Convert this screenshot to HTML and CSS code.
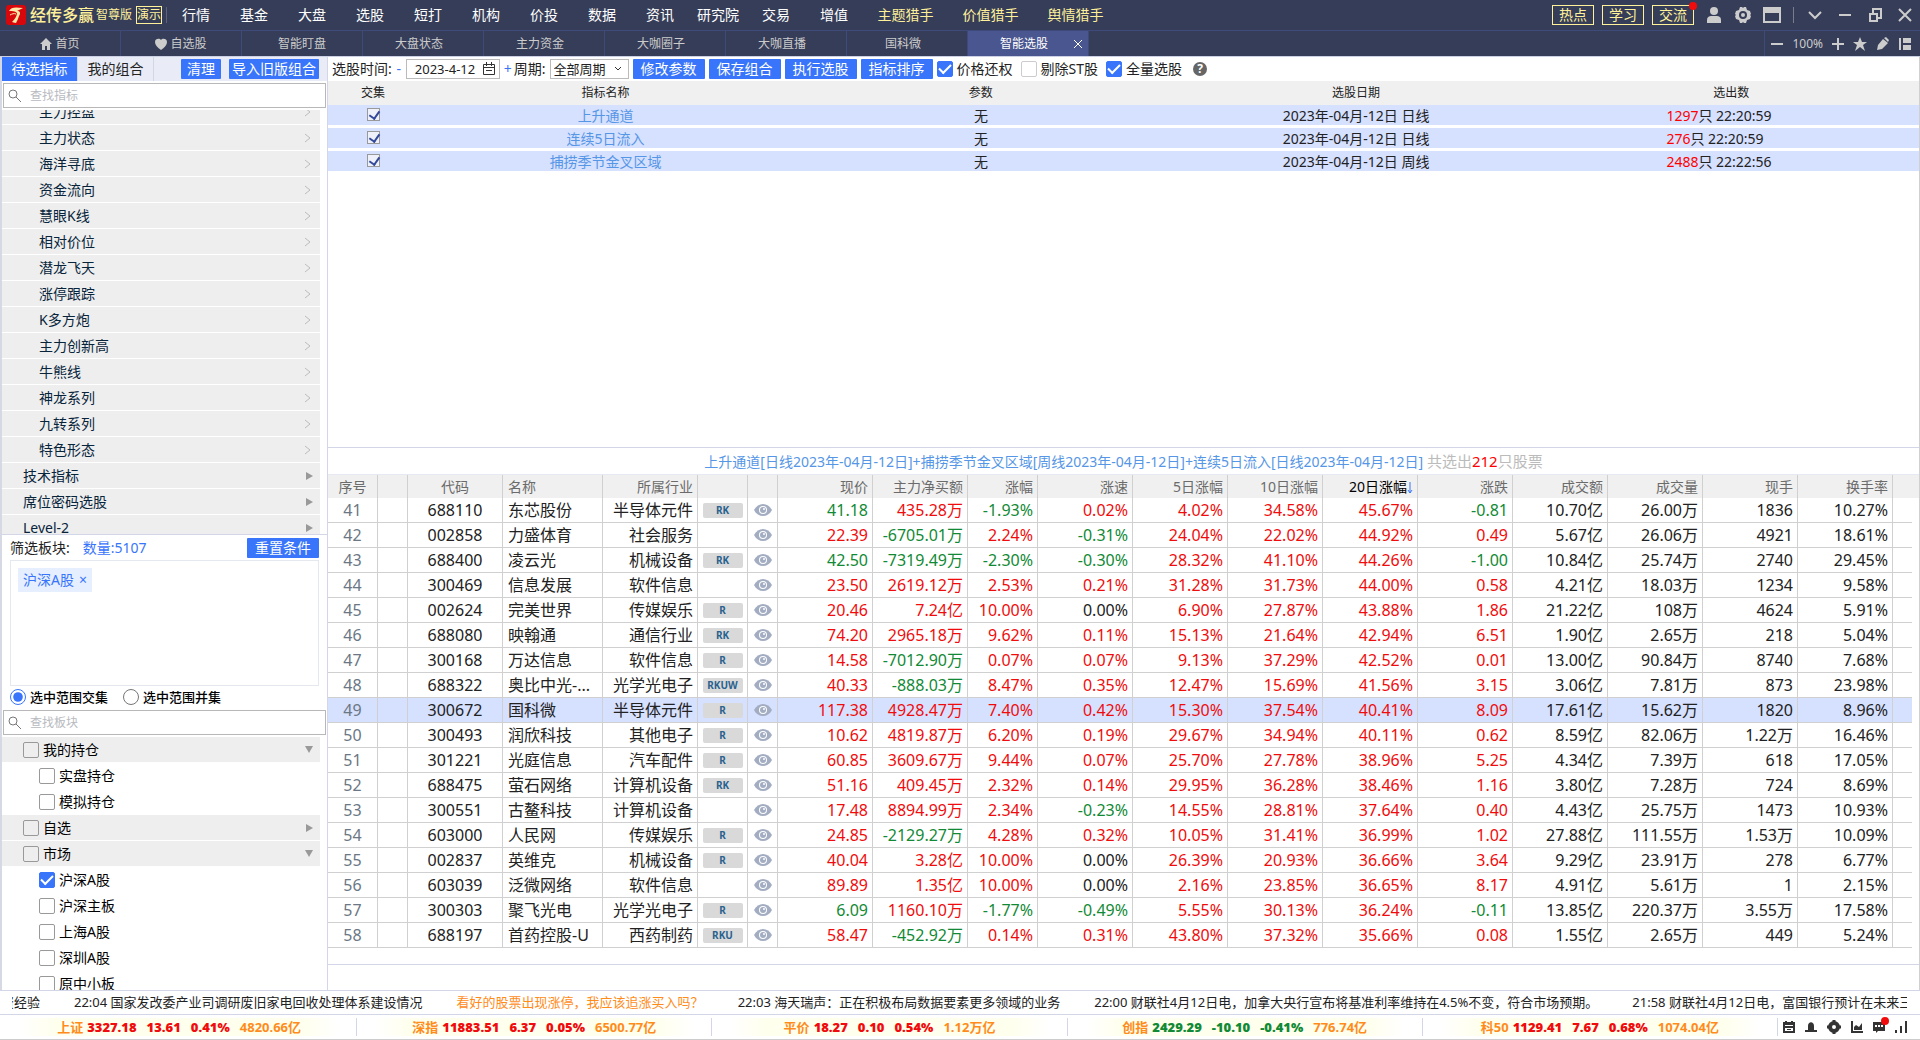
FILE: index.html
```html
<!DOCTYPE html>
<html lang="zh-CN">
<head>
  <meta charset="UTF-8">
  <title>智能选股</title>
  <link rel="stylesheet" href="styles.css">
</head>
<body>
  <header class="topbar">
    <div class="brand">
      <svg class="logo" viewBox="0 0 20 20"><rect width="20" height="20" rx="3" fill="#d8070b"/><path d="M3 6c2-4 6-4 14-3-2 1-4 2-6 3 3 0 4 2 2 5-1 3-2 5-3 7-2 0-3-1-4-1 3-3 5-6 5-9-2-2-5-2-8-2z" fill="#ffe9a8"/><path d="M4 10c2-1 4-2 6-1" stroke="#ffe9a8" fill="none"/></svg>
      <span class="brand-name">经传多赢</span>
      <span class="brand-edition">智尊版</span>
      <span class="brand-demo">演示</span>
    </div>
    <nav class="menu">
      <a href="#">行情</a><a href="#">基金</a><a href="#">大盘</a><a href="#">选股</a><a href="#">短打</a><a href="#">机构</a><a href="#">价投</a><a href="#">数据</a><a href="#">资讯</a><a href="#">研究院</a><a href="#">交易</a><a href="#">增值</a><a href="#" class="hunter">主题猎手</a><a href="#" class="hunter">价值猎手</a><a href="#" class="hunter">舆情猎手</a>
    </nav>
    <div class="top-right">
      <button class="outline-btn">热点</button>
      <button class="outline-btn">学习</button>
      <button class="outline-btn">交流<span class="dot"></span></button>
      <button class="icon-btn" aria-label="用户"><svg width="18" height="18" viewBox="0 0 18 18" fill="#ccc"><ellipse cx="9" cy="5" rx="4" ry="4"/><path d="M2 17v-3c0-3 2-4 4-4h6c2 0 4 1 4 4v3z"/></svg></button>
      <button class="icon-btn" aria-label="设置"><svg width="18" height="18" viewBox="0 0 18 18"><path d="M6 1h2l1 1 1-1h2l1 3 3 1 1 3-1 1 1 1-1 3-3 1-1 3h-2l-1-1-1 1H6l-1-3-3-1-1-3 1-1-1-1 1-3 3-1z" fill="#ccc"/><circle cx="9" cy="9" r="4" fill="#363d58"/><circle cx="9" cy="9" r="2" fill="#ccc"/></svg></button>
      <button class="icon-btn" aria-label="窗口"><svg width="18" height="18" viewBox="0 0 18 18"><path d="M1 2h16v14H1z" fill="none" stroke="#ccc" stroke-width="2"/><path d="M1 2h16v5H1z" fill="#ccc"/></svg></button>
      <span class="split"></span>
      <button class="win-btn" aria-label="收起"><svg width="14" height="14" viewBox="0 0 14 14"><path d="M1 4l6 6 6-6"/></svg></button>
      <button class="win-btn" aria-label="最小化"><svg width="14" height="14" viewBox="0 0 14 14"><path d="M1 7h12"/></svg></button>
      <button class="win-btn" aria-label="还原"><svg width="14" height="14" viewBox="0 0 14 14"><path d="M2 6h7v7H2zM5 6V1h8v9H9"/></svg></button>
      <button class="win-btn" aria-label="关闭"><svg width="14" height="14" viewBox="0 0 14 14"><path d="M1 1l12 12M13 1L1 13"/></svg></button>
    </div>
  </header>

  <nav class="tabs">
    <a href="#"><svg width="12" height="12" viewBox="0 0 12 12" fill="#ccc"><path d="M6 0l6 6h-2v6H7V8H5v4H2V6H0z"/></svg>首页</a>
    <a href="#"><svg width="12" height="12" viewBox="0 0 12 12" fill="#ccc"><path d="M6 12C2 9 0 7 0 4c0-4 5-4 6-2 1-2 6-2 6 2 0 3-2 5-6 8z"/></svg>自选股</a>
    <a href="#">智能盯盘</a>
    <a href="#" class="closable">大盘状态</a>
    <a href="#" class="closable">主力资金</a>
    <a href="#" class="closable">大咖圈子</a>
    <a href="#" class="closable">大咖直播</a>
    <a href="#" class="closable">国科微</a>
    <a href="#" class="active"><span>智能选股</span><svg width="8" height="10" viewBox="0 0 8 10"><path d="M0 1l8 8M8 1L0 9" stroke="#fff"/></svg></a>
    <div class="tab-tools">
      <button class="icon-btn" aria-label="缩小"><svg width="12" height="12" viewBox="0 0 12 12"><path d="M0 6h12" stroke="#ccc" stroke-width="2"/></svg></button>
      <span>100%</span>
      <button class="icon-btn" aria-label="放大"><svg width="12" height="12" viewBox="0 0 12 12"><path d="M0 6h12M6 0v12" stroke="#ccc" stroke-width="2"/></svg></button>
      <button class="icon-btn" aria-label="收藏"><svg width="14" height="14" viewBox="0 0 14 14" fill="#ccc"><path d="M7 0l2 5h5l-4 3 2 6-5-4-5 4 2-6-4-3h5z"/></svg></button>
      <button class="icon-btn" aria-label="画线"><svg width="14" height="14" viewBox="0 0 14 14" fill="#ccc"><path d="M1 13l1-5 5-6 5 4-6 6zM8 1l2-1 3 3-1 2z"/></svg></button>
      <button class="icon-btn" aria-label="布局"><svg width="12" height="12" viewBox="0 0 12 12" fill="#ccc"><path d="M0 0h2v12H0zM4 0h8v5H4zM4 7h8v5H4z"/></svg></button>
    </div>
  </nav>

  <div class="content">
    <aside class="side">
      <div class="side-tabs">
        <button class="side-tab on">待选指标</button>
        <button class="side-tab">我的组合</button>
        <button class="btn push">清理</button>
        <button class="btn old-btn">导入旧版组合</button>
      </div>
      <label class="search">
        <svg width="14" height="14" viewBox="0 0 14 14"><circle cx="5" cy="5" r="4"/><path d="M8 8l5 5"/></svg>
        <input type="text" placeholder="查找指标" aria-label="查找指标">
      </label>
      <div class="indicators">
        <ul class="indicator-list" id="indicators"></ul>
      </div>
      <div class="filter">
        <div class="filter-head">
          <span>筛选板块:</span>
          <span class="count">数量:5107</span>
          <button class="btn push">重置条件</button>
        </div>
        <div class="filter-box"><span class="tag">沪深A股<button aria-label="移除">×</button></span></div>
        <div class="range">
          <label><input type="radio" name="range" checked>选中范围交集</label>
          <label><input type="radio" name="range">选中范围并集</label>
        </div>
      </div>
      <label class="search">
        <svg width="14" height="14" viewBox="0 0 14 14"><circle cx="5" cy="5" r="4"/><path d="M8 8l5 5"/></svg>
        <input type="text" placeholder="查找板块" aria-label="查找板块">
      </label>
      <div class="sectors">
        <div class="sector head"><label><input class="box" type="checkbox">我的持仓</label><i class="tri down"></i></div>
        <div class="sector"><label><input class="box" type="checkbox">实盘持仓</label></div>
        <div class="sector"><label><input class="box" type="checkbox">模拟持仓</label></div>
        <div class="sector head"><label><input class="box" type="checkbox">自选</label><i class="tri"></i></div>
        <div class="sector head"><label><input class="box" type="checkbox">市场</label><i class="tri down"></i></div>
        <div class="sector"><label><input class="box" type="checkbox" checked>沪深A股</label></div>
        <div class="sector"><label><input class="box" type="checkbox">沪深主板</label></div>
        <div class="sector"><label><input class="box" type="checkbox">上海A股</label></div>
        <div class="sector"><label><input class="box" type="checkbox">深圳A股</label></div>
        <div class="sector"><label><input class="box" type="checkbox">原中小板</label></div>
      </div>
    </aside>

    <main class="main">
      <div class="toolbar">
        <label for="date">选股时间:</label>
        <button class="step">-</button>
        <span class="date">
          <input type="text" id="date" value="2023-4-12">
          <svg width="12" height="14" viewBox="0 0 12 14" fill="none" stroke="#333"><path d="M.5 2.500h11v10H.5zM.5 5.500h11M3.500 0v4M8.500 0v4M3 8.500h6"/></svg>
        </span>
        <button class="step">+</button>
        <label for="period">周期:</label>
        <span class="period">
          <select id="period"><option>全部周期</option></select>
          <svg width="8" height="8" viewBox="0 0 8 8"><path d="M1 2l3 3 3-3" fill="none" stroke="#333"/></svg>
        </span>
        <button class="btn">修改参数</button>
        <button class="btn">保存组合</button>
        <button class="btn">执行选股</button>
        <button class="btn">指标排序</button>
        <label class="opt"><input class="box" type="checkbox" checked>价格还权</label>
        <label class="opt"><input class="box" type="checkbox">剔除ST股</label>
        <label class="opt"><input class="box" type="checkbox" checked>全量选股</label>
        <button class="help" aria-label="帮助">?</button>
      </div>

      <section class="picks">
        <table class="pick-table">
          <thead>
            <tr><th class="col-check">交集</th><th>指标名称</th><th>参数</th><th>选股日期</th><th>选出数</th></tr>
          </thead>
          <tbody>
            <tr>
              <td><input class="mini" type="checkbox" aria-label="上升通道" checked></td>
              <td><a href="#">上升通道</a></td><td>无</td><td>2023年-04月-12日 日线</td>
              <td><div class="hits"><b>1297</b>只 22:20:59</div></td>
            </tr>
            <tr>
              <td><input class="mini" type="checkbox" aria-label="连续5日流入" checked></td>
              <td><a href="#">连续5日流入</a></td><td>无</td><td>2023年-04月-12日 日线</td>
              <td><div class="hits"><b>276</b>只 22:20:59</div></td>
            </tr>
            <tr>
              <td><input class="mini" type="checkbox" aria-label="捕捞季节金叉区域" checked></td>
              <td><a href="#">捕捞季节金叉区域</a></td><td>无</td><td>2023年-04月-12日 周线</td>
              <td><div class="hits"><b>2488</b>只 22:22:56</div></td>
            </tr>
          </tbody>
        </table>
      </section>

      <section class="result">
        <div class="formula">上升通道[日线2023年-04月-12日]+捕捞季节金叉区域[周线2023年-04月-12日]+连续5日流入[日线2023年-04月-12日] <span>共选出<b>212</b>只股票</span></div>
        <div class="stock-wrap">
          <table class="stocks">
            <colgroup>
              <col class="w50"><col class="w30"><col class="w95"><col class="w100"><col class="w95"><col class="w50"><col class="w30"><col class="w95"><col class="w95"><col class="w70"><col class="w95"><col class="w95"><col class="w95"><col class="w95"><col class="w95"><col class="w95"><col class="w95"><col class="w95"><col class="w95"><col>
            </colgroup>
            <thead>
              <tr><th class="mid">序号</th><th></th><th class="mid">代码</th><th class="name">名称</th><th>所属行业</th><th></th><th></th><th>现价</th><th>主力净买额</th><th>涨幅</th><th>涨速</th><th>5日涨幅</th><th>10日涨幅</th><th class="sorted">20日涨幅<svg width="6" height="12" viewBox="0 0 6 12"><path d="M3 0v11M1 8l2 3 2-3"/></svg></th><th>涨跌</th><th>成交额</th><th>成交量</th><th>现手</th><th>换手率</th><th></th></tr>
            </thead>
            <tbody id="stocks"></tbody>
          </table>
        </div>
      </section>
    </main>
  </div>

  <div class="news">
    <div class="news-track">
      <span class="cut">资经验</span>
      <span>22:04 国家发改委产业司调研废旧家电回收处理体系建设情况</span>
      <span class="ask">看好的股票出现涨停，我应该追涨买入吗？</span>
      <span>22:03 海天瑞声：正在积极布局数据要素更多领域的业务</span>
      <span>22:00 财联社4月12日电，加拿大央行宣布将基准利率维持在4.5%不变，符合市场预期。</span>
      <span>21:58 财联社4月12日电，富国银行预计在未来三年</span>
    </div>
  </div>

  <footer class="indexes">
    <div class="index up">上证 <b>3327.18</b><b>13.61</b><b>0.41%</b><em>4820.66亿</em></div>
    <div class="index up">深指 <b>11883.51</b><b>6.37</b><b>0.05%</b><em>6500.77亿</em></div>
    <div class="index up">平价 <b>18.27</b><b>0.10</b><b>0.54%</b><em>1.12万亿</em></div>
    <div class="index down">创指 <b>2429.29</b><b>-10.10</b><b>-0.41%</b><em>776.74亿</em></div>
    <div class="index up">科50 <b>1129.41</b><b>7.67</b><b>0.68%</b><em>1074.04亿</em></div>
    <div class="status">
      <svg width="12" height="12" viewBox="0 0 12 12" fill="#333"><path d="M0 1h2V0h2v1h4V0h2v1h2v11H0zM2 4v1h8V4zM2 7v3h8V7zM4 8h4v1H4z" fill-rule="evenodd"/></svg>
      <svg width="12" height="12" viewBox="0 0 12 12" fill="#333"><path d="M3 9V5c0-5 6-5 6 0v4h3v2H0V9z"/></svg>
      <svg width="14" height="14" viewBox="0 0 14 14"><circle cx="7" cy="7" r="4" fill="none" stroke="#333" stroke-width="4"/><path d="M7 0v4M7 10v4M0 7h4M10 7h4" stroke="#333" stroke-width="3"/></svg>
      <svg width="12" height="12" viewBox="0 0 12 12" fill="#333"><path d="M0 0h2v10h10v2H0zM3 9V6l2-2 3 2 3-4v7z"/></svg>
      <span class="chat"><svg width="12" height="12" viewBox="0 0 12 12"><path d="M0 1h12v9H5l-2 2v-2H0z" fill="#333"/><path d="M2 5h2M5 5h2M8 5h2" stroke="#fff" stroke-width="2"/></svg><span class="dot"></span></span>
      <svg width="12" height="12" viewBox="0 0 12 12" fill="#333"><path d="M0 9h2v3H0zM5 5h2v7H5zM10 0h2v12h-2z"/></svg>
    </div>
  </footer>
  <script src="script.js"></script>
</body>
</html>
```
FILE: styles.css
```css
* {
  box-sizing: border-box;
}
body {
  margin: 0;
  height: 100vh;
  display: flex;
  flex-direction: column;
  overflow: hidden;
  background: #fff;
  color: #222;
  font-family: "Noto Sans", "Noto Sans CJK SC", sans-serif;
  font-size: 14px;
  line-height: 20px;
  white-space: nowrap;
}
a {
  color: inherit;
  text-decoration: none;
}
button,
input,
select {
  margin: 0;
  padding: 0;
  border: none;
  background: none;
  color: inherit;
  font: inherit;
}
button {
  cursor: pointer;
}
svg {
  display: block;
  flex: none;
}
em,
i {
  font-style: normal;
}
table {
  width: 100%;
  border-collapse: separate;
  border-spacing: 0;
  table-layout: fixed;
}
th,
td {
  padding: 0;
  font-weight: normal;
}

/* top bar */
.topbar {
  display: flex;
  flex: none;
  align-items: center;
  height: 31px;
  background: #363d58;
  border-bottom: 1px solid #3e4a7a;
  color: #fff;
}
.brand {
  display: flex;
  align-items: center;
  width: 167px;
  height: 16px;
  padding-left: 6px;
  border-right: 1px solid #5d6379;
  color: #fff09a;
}
.logo {
  width: 20px;
  height: 20px;
  margin-right: 4px;
}
.brand-name {
  font-size: 16px;
  font-weight: 500;
  margin-right: 2px;
}
.brand-edition {
  font-size: 12px;
  margin-right: 4px;
}
.brand-demo {
  font-size: 12px;
  line-height: 16px;
  border: 1px solid #fff09a;
}
.menu {
  display: flex;
  flex: 1;
}
.menu a {
  width: 58px;
  text-align: center;
}
.menu .hunter {
  width: 85px;
  color: #fff09a;
}
.top-right {
  display: flex;
  align-items: center;
  gap: 8px;
  padding-right: 6px;
}
.outline-btn {
  position: relative;
  width: 42px;
  line-height: 18px;
  border: 1px solid #fff09a;
  color: #fff09a;
}
.dot {
  position: absolute;
  top: -4px;
  right: -4px;
  width: 8px;
  height: 8px;
  border-radius: 50%;
  background: #f00c0c;
}
.top-right .icon-btn {
  margin-left: 3px;
}
.split {
  width: 1px;
  height: 16px;
  margin-left: 4px;
  background: #777c8e;
}
.win-btn {
  margin-left: 4px;
  padding: 0 2px;
}
.win-btn svg {
  fill: none;
  stroke: #ccc;
  stroke-width: 2;
}

/* page tabs */
.tabs {
  display: flex;
  flex: none;
  height: 26px;
  background: #363d58;
  border-bottom: 1px solid #ccd0e4;
  color: #ccc;
  font-size: 12px;
  line-height: 24px;
}
.tabs a {
  display: flex;
  align-items: center;
  justify-content: center;
  gap: 3px;
  width: 121px;
  border-right: 1px solid #3e4a7a;
}
.tabs .closable {
  padding-right: 8px;
}
.tabs .active {
  justify-content: flex-end;
  gap: 26px;
  padding-right: 6px;
  background: #4a568f;
  color: #fff;
}
.tab-tools {
  display: flex;
  align-items: center;
  gap: 9px;
  margin-left: auto;
  padding: 0 9px 0 6px;
  border-left: 1px solid #3e4a7a;
}

.content {
  display: flex;
  flex: 1;
  min-height: 0;
}
.btn {
  padding: 0 8px;
  border-radius: 1px;
  background: #3875fb;
  color: #fff;
  line-height: 20px;
}
.push {
  margin-left: auto;
}

/* left panel */
.side {
  display: flex;
  flex-direction: column;
  width: 328px;
  border-left: 2px solid #d6d8e4;
  border-right: 1px solid #d3d6e6;
}
.side-tabs {
  display: flex;
  flex: none;
  align-items: center;
  height: 24px;
  padding-right: 8px;
  background: #e9ecf6;
}
.side-tab {
  width: 76px;
  line-height: 24px;
  border-right: 1px solid #d3d6e6;
}
.side-tab.on {
  background: #3875fb;
  color: #fff;
}
.side-tabs .push {
  padding: 0 6px;
}
.side-tabs .old-btn {
  margin-left: 8px;
  padding: 0 3px;
}
.search {
  display: flex;
  flex: none;
  align-items: center;
  gap: 8px;
  height: 25px;
  margin: 2px 1px;
  padding: 0 4px;
  border: 1px solid #b8b8b8;
}
.search svg {
  fill: none;
  stroke: #777;
}
.search input {
  flex: 1;
  min-width: 0;
  outline: none;
  font-size: 12px;
}
.search input::placeholder {
  color: #b8bac0;
}
.indicators {
  flex: 0 0 425px;
  overflow: hidden;
  border-bottom: 1px solid #d3d6e6;
}
/* list is scrolled part way through its first row */
.indicator-list {
  margin: -11px 7px 0 0;
  padding: 0;
  list-style: none;
}
.indicator-list li,
.sector {
  display: flex;
  align-items: center;
  justify-content: space-between;
  height: 26px;
  border-bottom: 1px solid #fff;
}
.indicator-list li {
  padding: 0 9px 0 37px;
  background: #eee;
  color: #07243b;
}
.indicator-list .group {
  padding: 0 7px 0 21px;
}
.indicator-list svg {
  fill: none;
  stroke: #bbb;
}
.tri {
  border: 4px solid transparent;
  border-left: 7px solid #999;
  border-right: none;
}
.tri.down {
  border: 4px solid transparent;
  border-top: 7px solid #999;
  border-bottom: none;
}
.filter {
  flex: none;
  padding: 0 8px;
}
.filter-head {
  display: flex;
  align-items: center;
  height: 25px;
}
.count {
  margin-left: 13px;
  color: #3875fb;
}
.filter-box {
  height: 126px;
  padding: 7px;
  border: 1px solid #e6e8f0;
}
.tag {
  display: inline-block;
  padding: 0 5px;
  background: #e6efff;
  color: #3875fb;
  line-height: 24px;
}
.tag button {
  margin-left: 5px;
}
.range {
  display: flex;
  gap: 15px;
  height: 22px;
  align-items: center;
  color: #000;
  font-size: 13px;
  font-weight: 500;
}
.range label,
.sector label,
.opt {
  display: flex;
  align-items: center;
  gap: 4px;
}
.range input {
  width: 16px;
  height: 16px;
  accent-color: #3875fb;
}
.sectors {
  flex: 1;
  min-height: 0;
  overflow: hidden;
  padding-right: 7px;
  color: #000;
}
.sector {
  padding-left: 37px;
}
.sector.head {
  padding: 0 7px 0 21px;
  background: #eee;
}
.box {
  appearance: none;
  display: grid;
  place-items: center;
  width: 16px;
  height: 16px;
  border: 1px solid #999;
  border-radius: 2px;
}
.box:checked {
  border-color: #3875fb;
  background: #3875fb;
}
.box:checked::before {
  content: "";
  width: 10px;
  height: 5px;
  margin-bottom: 3px;
  border: solid #fff;
  border-width: 0 0 2px 2px;
  transform: rotate(-45deg);
}

/* main area */
.main {
  display: flex;
  flex: 1;
  flex-direction: column;
  min-width: 0;
  border-right: 1px solid #d0d0d0;
}
.toolbar {
  display: flex;
  flex: none;
  align-items: center;
  gap: 4px;
  height: 24px;
  padding-left: 4px;
}
.step {
  width: 6px;
  color: #3875fb;
}
.date,
.period {
  display: flex;
  align-items: center;
  height: 20px;
  border: 1px solid #bbb;
  font-size: 13px;
}
.date {
  width: 94px;
  padding: 0 4px 0 8px;
  justify-content: space-between;
}
.date input {
  width: 62px;
}
.period {
  width: 79px;
  padding: 0 6px 0 3px;
}
.period select {
  flex: 1;
  appearance: none;
}
.opt .box {
  border-color: #ccc;
}
.opt .box:checked {
  border-color: #3875fb;
}
.opt + .opt {
  margin-left: 4px;
}
.help {
  width: 14px;
  height: 14px;
  margin-left: 7px;
  border-radius: 50%;
  background: #666;
  color: #fff;
  font-size: 12px;
  font-weight: bold;
  line-height: 14px;
}
.picks {
  flex: 1;
  min-height: 0;
  overflow: hidden;
}
.pick-table {
  text-align: center;
}
.pick-table th {
  height: 24px;
  background: #f0f0f0;
  font-size: 12px;
}
.pick-table .col-check {
  width: 90px;
}
.pick-table td {
  height: 23px;
  padding-top: 2px;
  background: #d6e0ff;
  border-bottom: 3px solid #fff;
  line-height: 18px;
}
.pick-table a {
  color: #5596e6;
}
.mini {
  appearance: none;
  display: block;
  width: 13px;
  height: 13px;
  margin: 0 auto 3px;
  border: 1px solid #999;
  background: #eef1fa;
}
.mini:checked::before {
  content: "";
  display: block;
  width: 5px;
  height: 8px;
  margin: 0 3px;
  border: solid #33489a;
  border-width: 0 2px 2px 0;
  transform: rotate(35deg);
}
.hits {
  width: 130px;
  margin: 0 auto;
  text-align: left;
}
.hits b,
.formula b {
  color: #f00;
  font-weight: normal;
}

/* result list */
.result {
  flex: none;
  border-top: 1px solid #d3d6e6;
}
.formula {
  height: 27px;
  border-bottom: 1px solid #e6e8f2;
  color: #5596e6;
  line-height: 26px;
  text-align: center;
}
.formula span {
  color: #bbb;
  font-size: 15px;
}
.stock-wrap {
  height: 490px;
  margin-bottom: 25px;
  padding-right: 7px;
  background: linear-gradient(#f0f0f0, #f0f0f0) top / 100% 23px no-repeat;
  border-bottom: 1px solid #d3d6e6;
}
.stocks th {
  height: 23px;
  padding-right: 4px;
  border-right: 1px solid #d0d0d0;
  color: #6b6b6b;
  text-align: right;
}
.stocks td {
  height: 25px;
  padding-right: 4px;
  border-right: 1px solid #d0d0d0;
  border-bottom: 1px solid #d0d0d0;
  font-size: 16px;
  line-height: 24px;
  text-align: right;
}
.stocks th:last-child,
.stocks td:last-child {
  border-right: none;
}
.stocks .mid {
  padding: 0;
  text-align: center;
}
.stocks .seq {
  color: #6b7784;
}
.stocks .name {
  padding-left: 5px;
  text-align: left;
}
.stocks .sorted {
  color: #000;
}
.sorted svg {
  display: inline-block;
  vertical-align: middle;
  fill: none;
  stroke: #3875fb;
}
.stocks .selected {
  background: #d6e0ff;
}
.up,
.index.up b {
  color: #f00c0c;
}
.down,
.index.down b {
  color: #128a35;
}
.badge {
  display: block;
  width: 40px;
  margin: 0 auto;
  border-radius: 2px;
  background: #d9d9d9;
  color: #2a628f;
  font-size: 10px;
  font-weight: bold;
  line-height: 15px;
}
.stocks .mid svg {
  margin: 0 auto;
}
.w30 {
  width: 30px;
}
.w50 {
  width: 50px;
}
.w70 {
  width: 70px;
}
.w95 {
  width: 95px;
}
.w100 {
  width: 100px;
}

/* news ticker and index bar */
.news {
  flex: none;
  height: 24px;
  padding: 0 13px 0 12px;
  border-top: 1px solid #d3d6e6;
  font-size: 13px;
  line-height: 23px;
}
.news-track {
  display: flex;
  gap: 34px;
  overflow: hidden;
}
.news-track span {
  flex: none;
}
.news-track .cut {
  width: 28px;
  overflow: hidden;
  direction: rtl;
}
.news .ask {
  color: #ff8c1a;
}
.indexes {
  display: flex;
  flex: none;
  align-items: center;
  height: 26px;
  padding-left: 2px;
  border-top: 1px solid #d3d6e6;
  border-bottom: 1px solid #ccc;
  font-size: 13px;
  line-height: 18px;
}
.indexes .index {
  flex: 1;
  display: flex;
  justify-content: center;
  gap: 10px;
  border-right: 1px solid #d3d6e6;
  background: linear-gradient(90deg, #fff 5%, #ffffee 15%, #ffffee 85%, #fff 95%);
  color: #ff8c1a;
  font-weight: bold;
}
.index b:first-of-type {
  margin-left: -6px;
}
.status {
  display: flex;
  align-items: center;
  gap: 10px;
  width: 142px;
  padding-left: 5px;
}
.chat {
  position: relative;
}
```
FILE: script.js
```js
const indicators = ['主力控盘', '主力状态', '海洋寻底', '资金流向', '慧眼K线', '相对价位', '潜龙飞天', '涨停跟踪', 'K多方炮', '主力创新高', '牛熊线', '神龙系列', '九转系列', '特色形态'];
const groups = ['技术指标', '席位密码选股', 'Level-2'];

const chevron = '<svg width="6" height="10" viewBox="0 0 6 10"><path d="M0 1l5 4-5 4"/></svg>';
const eye = '<svg width="18" height="12" viewBox="0 0 18 12"><path d="M0 6c4-8 14-8 18 0-4 8-14 8-18 0z" fill="#a3adc2"/><circle cx="9" cy="6" r="4" fill="#fff"/><circle cx="9" cy="6" r="3" fill="#a3adc2"/><circle cx="10" cy="5" r="1" fill="#fff"/></svg>';

document.getElementById('indicators').innerHTML =
  indicators.map(name => `<li>${name}${chevron}</li>`).join('') +
  groups.map(name => `<li class="group">${name}<i class="tri"></i></li>`).join('');

// code, name, industry, badge, price colour, price, net buy, change, speed, 5d, 10d, 20d, diff, amount, volume, last, turnover
const rows = [
  '688110 东芯股份 半导体元件 RK down 41.18 435.28万 -1.93% 0.02% 4.02% 34.58% 45.67% -0.81 10.70亿 26.00万 1836 10.27%',
  '002858 力盛体育 社会服务 _ up 22.39 -6705.01万 2.24% -0.31% 24.04% 22.02% 44.92% 0.49 5.67亿 26.06万 4921 18.61%',
  '688400 凌云光 机械设备 RK down 42.50 -7319.49万 -2.30% -0.30% 28.32% 41.10% 44.26% -1.00 10.84亿 25.74万 2740 29.45%',
  '300469 信息发展 软件信息 _ up 23.50 2619.12万 2.53% 0.21% 31.28% 31.73% 44.00% 0.58 4.21亿 18.03万 1234 9.58%',
  '002624 完美世界 传媒娱乐 R up 20.46 7.24亿 10.00% 0.00% 6.90% 27.87% 43.88% 1.86 21.22亿 108万 4624 5.91%',
  '688080 映翰通 通信行业 RK up 74.20 2965.18万 9.62% 0.11% 15.13% 21.64% 42.94% 6.51 1.90亿 2.65万 218 5.04%',
  '300168 万达信息 软件信息 R up 14.58 -7012.90万 0.07% 0.07% 9.13% 37.29% 42.52% 0.01 13.00亿 90.84万 8740 7.68%',
  '688322 奥比中光-... 光学光电子 RKUW up 40.33 -888.03万 8.47% 0.35% 12.47% 15.69% 41.56% 3.15 3.06亿 7.81万 873 23.98%',
  '300672 国科微 半导体元件 R up 117.38 4928.47万 7.40% 0.42% 15.30% 37.54% 40.41% 8.09 17.61亿 15.62万 1820 8.96%',
  '300493 润欣科技 其他电子 R up 10.62 4819.87万 6.20% 0.19% 29.67% 34.94% 40.11% 0.62 8.59亿 82.06万 1.22万 16.46%',
  '301221 光庭信息 汽车配件 R up 60.85 3609.67万 9.44% 0.07% 25.70% 27.78% 38.96% 5.25 4.34亿 7.39万 618 17.05%',
  '688475 萤石网络 计算机设备 RK up 51.16 409.45万 2.32% 0.14% 29.95% 36.28% 38.46% 1.16 3.80亿 7.28万 724 8.69%',
  '300551 古鳌科技 计算机设备 _ up 17.48 8894.99万 2.34% -0.23% 14.55% 28.81% 37.64% 0.40 4.43亿 25.75万 1473 10.93%',
  '603000 人民网 传媒娱乐 R up 24.85 -2129.27万 4.28% 0.32% 10.05% 31.41% 36.99% 1.02 27.88亿 111.55万 1.53万 10.09%',
  '002837 英维克 机械设备 R up 40.04 3.28亿 10.00% 0.00% 26.39% 20.93% 36.66% 3.64 9.29亿 23.91万 278 6.77%',
  '603039 泛微网络 软件信息 _ up 89.89 1.35亿 10.00% 0.00% 2.16% 23.85% 36.65% 8.17 4.91亿 5.61万 1 2.15%',
  '300303 聚飞光电 光学光电子 R down 6.09 1160.10万 -1.77% -0.49% 5.55% 30.13% 36.24% -0.11 13.85亿 220.37万 3.55万 17.58%',
  '688197 首药控股-U 西药制药 RKU up 58.47 -452.92万 0.14% 0.31% 43.80% 37.32% 35.66% 0.08 1.55亿 2.65万 449 5.24%'
];

function sign(val) {
  const n = parseFloat(val);
  return n > 0 ? 'up' : n < 0 ? 'down' : '';
}

document.getElementById('stocks').innerHTML = rows.map((row, i) => {
  const [code, name, industry, badge, color, price, ...rest] = row.split(' ');
  const cells = rest.map((val, n) => `<td class="${n < 7 ? sign(val) : ''}">${val}</td>`).join('');
  return `<tr class="${code === '300672' ? 'selected' : ''}">
    <td class="mid seq">${41 + i}</td><td></td><td class="mid">${code}</td><td class="name">${name}</td><td>${industry}</td>
    <td class="mid">${badge === '_' ? '' : `<span class="badge">${badge}</span>`}</td><td class="mid">${eye}</td>
    <td class="${color}">${price}</td>${cells}<td></td></tr>`;
}).join('');
```
